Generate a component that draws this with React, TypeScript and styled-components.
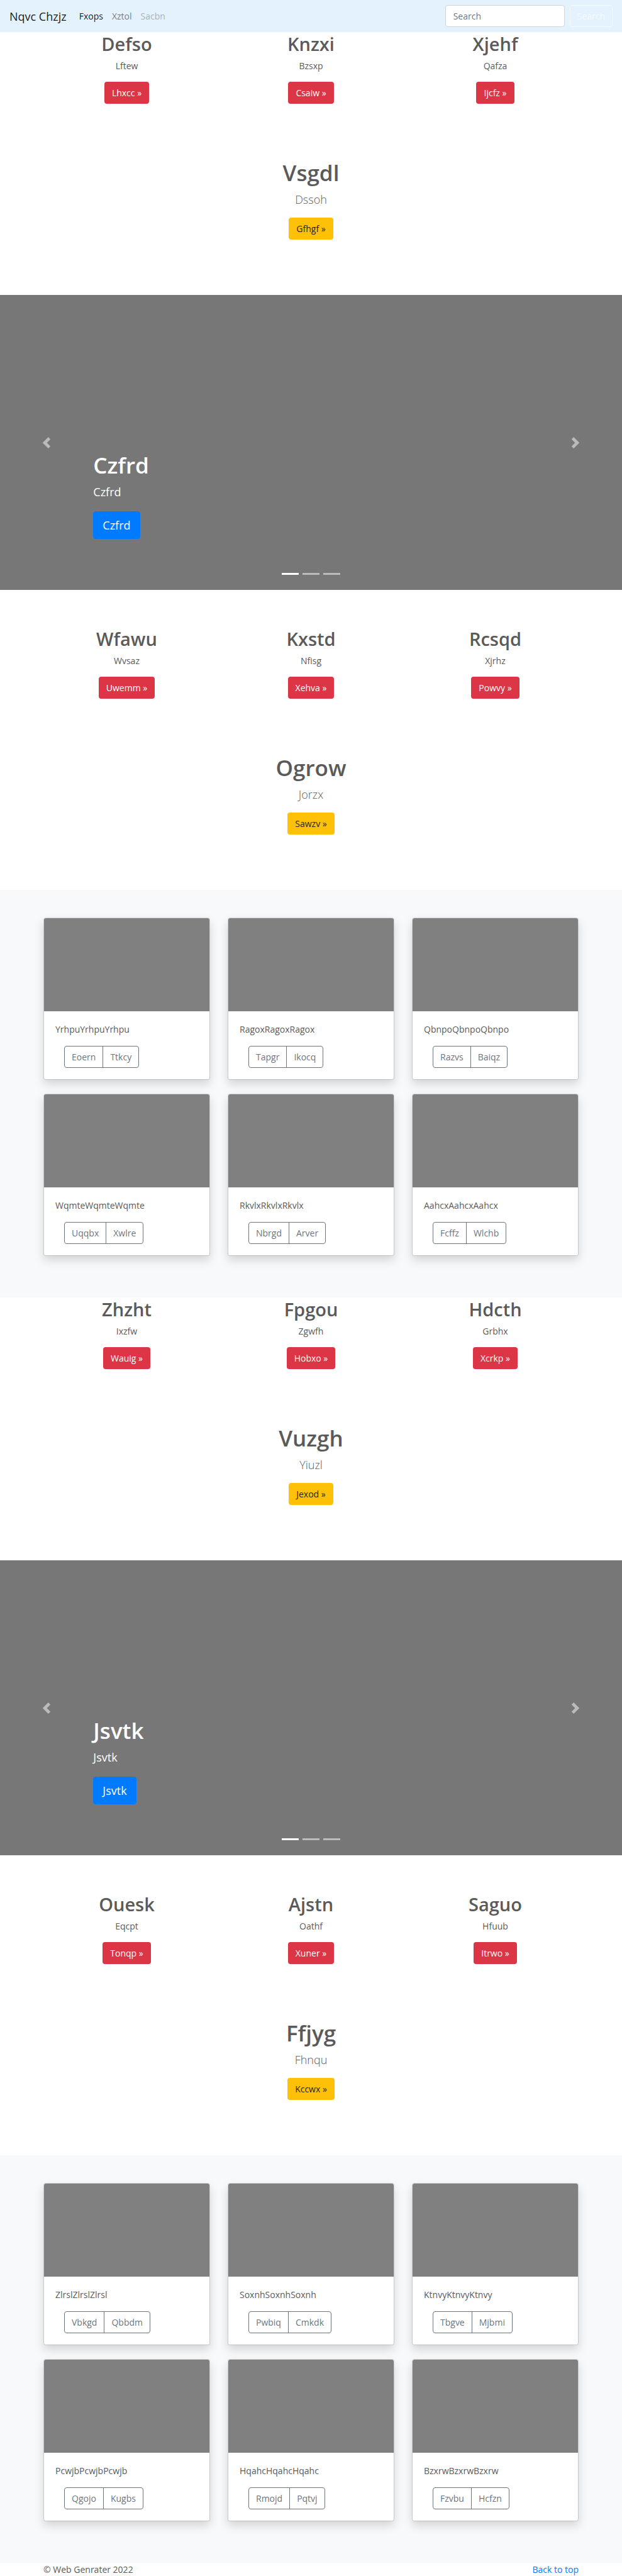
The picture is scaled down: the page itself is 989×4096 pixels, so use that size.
import React from "react";
import styled, { createGlobalStyle, css } from "styled-components";

const GlobalStyle = createGlobalStyle`
  *, *::before, *::after { box-sizing: border-box; }
  html { background: #fff; }
  body {
    margin: 0;
    color: #5a5a5a;
    background: #fff;
    font-family: "Segoe UI", "Open Sans", "Noto Sans", sans-serif;
    font-size: 14px;
    line-height: 22px;
  }
  h1, h2, p { margin: 0; }
  button, input { font: inherit; }
  a { text-decoration: none; }
`;

const Navbar = styled.nav`
  display: flex;
  align-items: center;
  height: 51px;
  padding: 0 15px;
  background: #e3f2fd;
`;

const Brand = styled.a`
  margin-right: 13px;
  color: rgba(0, 0, 0, 0.9);
  font-size: 18px;
  line-height: 28px;
`;

const NavList = styled.ul`
  display: flex;
  flex: 1;
  margin: 0;
  padding: 0;
  list-style: none;
`;

const navTones = {
  active: "rgba(0, 0, 0, 0.9)",
  normal: "rgba(0, 0, 0, 0.5)",
  disabled: "rgba(0, 0, 0, 0.3)",
};

const NavLink = styled.a<{ $tone: keyof typeof navTones }>`
  display: block;
  padding: 7px;
  color: ${(p) => navTones[p.$tone]};
`;

const SearchForm = styled.form`
  display: flex;
  gap: 8px;
`;

const SearchInput = styled.input`
  width: 190px;
  height: 35px;
  padding: 5px 12px;
  border: 1px solid #ced4da;
  border-radius: 4px;
  color: #495057;
  background: #fff;
  &::placeholder { color: #6c757d; opacity: 1; }
`;

const buttonBase = css`
  display: inline-block;
  height: 35px;
  padding: 0 11px;
  border: 1px solid transparent;
  border-radius: 4px;
  line-height: 33px;
  text-align: center;
  white-space: nowrap;
  cursor: pointer;
`;

const SearchButton = styled.button`
  ${buttonBase}
  color: #f8f9fa;
  background: transparent;
  border-color: #f8f9fa;
`;

const LinkButton = styled.a<{ $kind: "danger" | "warning" }>`
  ${buttonBase}
  color: ${(p) => (p.$kind === "danger" ? "#fff" : "#212529")};
  background: ${(p) => (p.$kind === "danger" ? "#dc3545" : "#ffc107")};
`;

const Container = styled.div`
  width: 100%;
  max-width: 879px;
  margin: 0 auto;
  padding: 0 14px;
`;

const Marketing = styled.section<{ $spaced?: boolean }>`
  padding: ${(p) => (p.$spaced ? 59 : 0)}px 0 88px;
  text-align: center;
`;

const Columns = styled.div`
  display: grid;
  grid-template-columns: repeat(3, 1fr);
  gap: 22px 28px;
`;

const ColumnTitle = styled.h2`
  margin-bottom: 6px;
  font-size: 29px;
  font-weight: 600;
  line-height: 37px;
`;

const ColumnText = styled.p`
  margin-bottom: 14px;
`;

const Callout = styled.div`
  margin-top: 87px;
`;

const Title = styled.h1`
  margin-bottom: 5px;
  font-size: 35px;
  font-weight: 600;
  line-height: 46px;
`;

const Lead = styled.p`
  margin-bottom: 15px;
  font-size: 18px;
  font-weight: 300;
  line-height: 28px;
`;

const CarouselFrame = styled.section`
  position: relative;
  display: flex;
  align-items: flex-end;
  height: 469px;
  padding: 0 15% 81px;
  color: #fff;
  background: #777;
`;

const CaptionText = styled.p`
  margin-bottom: 17px;
  font-size: 18px;
  line-height: 28px;
`;

const PrimaryButton = styled.a`
  display: inline-block;
  height: 44px;
  padding: 0 14px;
  border: 1px solid #007bff;
  border-radius: 4px;
  color: #fff;
  background: #007bff;
  font-size: 18px;
  line-height: 42px;
  vertical-align: top;
`;

const CarouselControl = styled.button<{ $side: "left" | "right" }>`
  position: absolute;
  top: 0;
  bottom: 0;
  ${(p) => p.$side}: 0;
  display: flex;
  align-items: center;
  justify-content: center;
  width: 15%;
  padding: 0;
  border: 0;
  color: #fff;
  background: none;
  opacity: 0.5;
`;

const Indicators = styled.div`
  position: absolute;
  right: 0;
  bottom: 24px;
  left: 0;
  display: flex;
  justify-content: center;
  gap: 6px;
`;

const Indicator = styled.button<{ $active: boolean }>`
  width: 27px;
  height: 3px;
  padding: 0;
  border: 0;
  background: #fff;
  opacity: ${(p) => (p.$active ? 1 : 0.5)};
`;

const Album = styled.section`
  padding: 44px 0 66px;
  background: #f7f9fb;
`;

const Card = styled.article`
  overflow: hidden;
  border: 1px solid rgba(0, 0, 0, 0.125);
  border-radius: 4px;
  background: #fff;
  background-clip: padding-box;
  box-shadow: 0 7px 15px rgba(0, 0, 0, 0.15);
`;

const CardImage = styled.div`
  height: 148px;
  background: #808080;
`;

const CardBody = styled.div`
  padding: 18px;
`;

const CardText = styled.p`
  margin-bottom: 15px;
`;

const ButtonGroup = styled.div`
  display: flex;
  padding-left: 14px;
`;

const GroupButton = styled.button`
  ${buttonBase}
  color: #6c757d;
  background: transparent;
  border-color: #6c757d;
  &:first-child { border-radius: 4px 0 0 4px; }
  &:last-child { margin-left: -1px; border-radius: 0 4px 4px 0; }
`;

const FooterRow = styled.div`
  display: flex;
  justify-content: space-between;
  line-height: 21px;
`;

const FooterLink = styled.a`
  color: #007bff;
`;

type Triple = [string, string, string];

interface Block {
  columns: Triple[];
  callout: Triple;
}

interface Page {
  intro: Block;
  slide: string;
  details: Block;
  cards: Triple[];
}

const pages: Page[] = [
  {
    intro: {
      columns: [["Defso", "Lftew", "Lhxcc"], ["Knzxi", "Bzsxp", "Csaiw"], ["Xjehf", "Qafza", "Ijcfz"]],
      callout: ["Vsgdl", "Dssoh", "Gfhgf"],
    },
    slide: "Czfrd",
    details: {
      columns: [["Wfawu", "Wvsaz", "Uwemm"], ["Kxstd", "Nfisg", "Xehva"], ["Rcsqd", "Xjrhz", "Powvy"]],
      callout: ["Ogrow", "Jorzx", "Sawzv"],
    },
    cards: [
      ["Yrhpu", "Eoern", "Ttkcy"], ["Ragox", "Tapgr", "Ikocq"], ["Qbnpo", "Razvs", "Baiqz"],
      ["Wqmte", "Uqqbx", "Xwlre"], ["Rkvlx", "Nbrgd", "Arver"], ["Aahcx", "Fcffz", "Wlchb"],
    ],
  },
  {
    intro: {
      columns: [["Zhzht", "Ixzfw", "Wauig"], ["Fpgou", "Zgwfh", "Hobxo"], ["Hdcth", "Grbhx", "Xcrkp"]],
      callout: ["Vuzgh", "Yiuzl", "Jexod"],
    },
    slide: "Jsvtk",
    details: {
      columns: [["Ouesk", "Eqcpt", "Tonqp"], ["Ajstn", "Oathf", "Xuner"], ["Saguo", "Hfuub", "Itrwo"]],
      callout: ["Ffjyg", "Fhnqu", "Kccwx"],
    },
    cards: [
      ["Zlrsl", "Vbkgd", "Qbbdm"], ["Soxnh", "Pwbiq", "Cmkdk"], ["Ktnvy", "Tbgve", "Mjbmi"],
      ["Pcwjb", "Qgojo", "Kugbs"], ["Hqahc", "Rmojd", "Pqtvj"], ["Bzxrw", "Fzvbu", "Hcfzn"],
    ],
  },
];

function MarketingBlock({ block, spaced }: { block: Block; spaced?: boolean }) {
  const [title, lead, action] = block.callout;
  return (
    <Marketing $spaced={spaced}>
      <Container>
        <Columns>
          {block.columns.map(([heading, text, label]) => (
            <div key={heading}>
              <ColumnTitle>{heading}</ColumnTitle>
              <ColumnText>{text}</ColumnText>
              <LinkButton href="#" $kind="danger">{label} »</LinkButton>
            </div>
          ))}
        </Columns>
        <Callout>
          <Title>{title}</Title>
          <Lead>{lead}</Lead>
          <LinkButton href="#" $kind="warning">{action} »</LinkButton>
        </Callout>
      </Container>
    </Marketing>
  );
}

function Carousel({ label }: { label: string }) {
  return (
    <CarouselFrame>
      <div>
        <Title>{label}</Title>
        <CaptionText>{label}</CaptionText>
        <PrimaryButton href="#">{label}</PrimaryButton>
      </div>
      <CarouselControl $side="left" aria-label="Previous">
        <svg width="18" height="18" viewBox="0 0 8 8" fill="currentColor">
          <path d="M5.25 0l-4 4 4 4 1.5-1.5L4.25 4l2.5-2.5L5.25 0z" />
        </svg>
      </CarouselControl>
      <CarouselControl $side="right" aria-label="Next">
        <svg width="18" height="18" viewBox="0 0 8 8" fill="currentColor">
          <path d="M2.75 0l-1.5 1.5L3.75 4l-2.5 2.5L2.75 8l4-4-4-4z" />
        </svg>
      </CarouselControl>
      <Indicators>
        {[0, 1, 2].map((i) => (
          <Indicator key={i} $active={i === 0} aria-label={`Slide ${i + 1}`} />
        ))}
      </Indicators>
    </CarouselFrame>
  );
}

function CardAlbum({ cards }: { cards: Triple[] }) {
  return (
    <Album>
      <Container>
        <Columns>
          {cards.map(([word, first, second]) => (
            <Card key={word}>
              <CardImage />
              <CardBody>
                <CardText>{word.repeat(3)}</CardText>
                <ButtonGroup>
                  <GroupButton type="button">{first}</GroupButton>
                  <GroupButton type="button">{second}</GroupButton>
                </ButtonGroup>
              </CardBody>
            </Card>
          ))}
        </Columns>
      </Container>
    </Album>
  );
}

export default function App() {
  return (
    <>
      <GlobalStyle />
      <Navbar>
        <Brand href="#">Nqvc Chzjz</Brand>
        <NavList>
          <li><NavLink href="#" $tone="active">Fxops</NavLink></li>
          <li><NavLink href="#" $tone="normal">Xztol</NavLink></li>
          <li><NavLink href="#" $tone="disabled">Sacbn</NavLink></li>
        </NavList>
        <SearchForm>
          <SearchInput type="search" placeholder="Search" aria-label="Search" />
          <SearchButton type="button">Search</SearchButton>
        </SearchForm>
      </Navbar>
      <main>
        {pages.map((page) => (
          <React.Fragment key={page.slide}>
            <MarketingBlock block={page.intro} />
            <Carousel label={page.slide} />
            <MarketingBlock block={page.details} spaced />
            <CardAlbum cards={page.cards} />
          </React.Fragment>
        ))}
      </main>
      <footer>
        <Container>
          <FooterRow>
            <span>© Web Genrater 2022</span>
            <FooterLink href="#">Back to top</FooterLink>
          </FooterRow>
        </Container>
      </footer>
    </>
  );
}
